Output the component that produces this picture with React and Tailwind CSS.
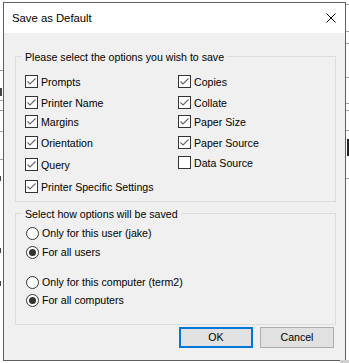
import React from "react";

function Check({ checked }) {
  return (
    <div className="w-[13px] h-[13px] shrink-0 border border-[#333333] bg-white flex items-center justify-center">
      {checked && (
        <svg width="11" height="11" viewBox="0 0 11 11">
          <polyline points="1.5,5.5 4,8 9.5,2.5" fill="none" stroke="#666666" strokeWidth="1.1" />
        </svg>
      )}
    </div>
  );
}

function Radio({ checked }) {
  return (
    <div className="w-[13px] h-[13px] shrink-0 rounded-full border border-[#333333] bg-white flex items-center justify-center">
      {checked && <div className="w-[7px] h-[7px] rounded-full bg-[#333333]" />}
    </div>
  );
}

function CRow({ label, checked = true, h }) {
  return (
    <div className={`flex items-start ${h}`}>
      <Check checked={checked} />
      <span className="ml-[3px] mt-[1px] whitespace-nowrap">{label}</span>
    </div>
  );
}

function RRow({ label, checked, h }) {
  return (
    <div className={`flex items-start ${h}`}>
      <Radio checked={checked} />
      <span className="ml-[3px] whitespace-nowrap">{label}</span>
    </div>
  );
}

export default function App() {
  return (
    <div className="relative w-[349px] h-[363px] bg-white overflow-hidden font-['Liberation_Sans',Arial,sans-serif] text-[10.6px] leading-[13px] text-black">
      {/* fragments of the window behind */}
      <div className="absolute left-0 top-[70px] w-[3px] h-px bg-[#a0a0a0]" />
      <div className="absolute left-0 top-[100px] w-[3px] h-px bg-[#a0a0a0]" />
      <div className="absolute left-0 top-[110px] w-[3px] h-px bg-[#a0a0a0]" />
      <div className="absolute left-0 top-[131px] w-[3px] h-px bg-[#a0a0a0]" />
      <div className="absolute left-0 top-[159px] w-[3px] h-px bg-[#a0a0a0]" />
      <div className="absolute left-0 top-[88px] w-[2px] h-[8px] bg-[#444]" />
      <div className="absolute left-0 top-[176px] w-[1px] h-[5px] bg-[#444]" />
      <div className="absolute left-0 top-[248px] w-[1px] h-[5px] bg-[#444]" />
      <div className="absolute left-0 top-[281px] w-[1px] h-[5px] bg-[#444]" />
      <div className="absolute right-0 top-[4px] w-[3px] h-px bg-[#a0a0a0]" />
      <div className="absolute right-0 top-[31px] w-[3px] h-px bg-[#a0a0a0]" />
      <div className="absolute right-0 top-[43px] w-[3px] h-px bg-[#a0a0a0]" />
      <div className="absolute right-0 top-[77px] w-[3px] h-px bg-[#a0a0a0]" />
      <div className="absolute right-0 top-[103px] w-[3px] h-px bg-[#a0a0a0]" />
      <div className="absolute right-0 top-[110px] w-[3px] h-px bg-[#a0a0a0]" />
      <div className="absolute right-0 top-[130px] w-[3px] h-px bg-[#a0a0a0]" />
      <div className="absolute right-0 top-[178px] w-[3px] h-px bg-[#a0a0a0]" />
      <div className="absolute right-0 top-[139px] w-[2px] h-[17px] bg-[#222]" />
      <div className="absolute right-0 bottom-0 w-[9px] h-[3px] bg-[#d0d0d0]" />

      {/* dialog */}
      <div className="ml-[3px] mt-[2px] w-[343px] h-[359px] border border-[#5f5f5f] flex flex-col bg-[#f0f0f0]">
        <div className="h-[30px] shrink-0 bg-white flex items-center justify-between pl-[8px] pr-[9px]">
          <span className="text-[11.3px] leading-[16px]">Save as Default</span>
          <svg width="10" height="10" viewBox="0 0 10 10">
            <path d="M0.5 0.5 L9.5 9.5 M9.5 0.5 L0.5 9.5" stroke="#000" strokeWidth="1" />
          </svg>
        </div>

        <div className="flex-1 pl-[11px] pt-[23px]">
          {/* group 1 */}
          <div className="relative w-[321px] h-[146px] border border-[#dcdcdc]">
            <span className="absolute left-[6px] top-[-6px] px-[3px] bg-[#f0f0f0] whitespace-nowrap">
              Please select the options you wish to save
            </span>
            <div className="flex pt-[18px] pl-[9px]">
              <div className="w-[153px] flex flex-col">
                <CRow label="Prompts" h="h-[21px]" />
                <CRow label="Printer Name" h="h-[19px]" />
                <CRow label="Margins" h="h-[21px]" />
                <CRow label="Orientation" h="h-[22px]" />
                <CRow label="Query" h="h-[22px]" />
                <CRow label="Printer Specific Settings" h="h-[13px]" />
              </div>
              <div className="flex flex-col">
                <CRow label="Copies" h="h-[21px]" />
                <CRow label="Collate" h="h-[19px]" />
                <CRow label="Paper Size" h="h-[21px]" />
                <CRow label="Paper Source" h="h-[20px]" />
                <CRow label="Data Source" checked={false} h="h-[13px]" />
              </div>
            </div>
          </div>

          {/* group 2 */}
          <div className="relative mt-[11px] w-[321px] h-[112px] border border-[#dcdcdc]">
            <span className="absolute left-[6px] top-[-6px] px-[3px] bg-[#f0f0f0] whitespace-nowrap">
              Select how options will be saved
            </span>
            <div className="flex flex-col pt-[13px] pl-[10px]">
              <RRow label="Only for this user (jake)" checked={false} h="h-[19px]" />
              <RRow label="For all users" checked h="h-[30px]" />
              <RRow label="Only for this computer (term2)" checked={false} h="h-[18px]" />
              <RRow label="For all computers" checked h="h-[13px]" />
            </div>
          </div>

          {/* buttons */}
          <div className="flex justify-end gap-[7px] mt-[2px] pr-[11px]">
            <button className="w-[74px] h-[21px] border-2 border-[#0078d7] bg-[#e1e1e1] flex items-center justify-center leading-[13px]">
              OK
            </button>
            <button className="w-[74px] h-[21px] border border-[#adadad] bg-[#e1e1e1] flex items-center justify-center leading-[13px]">
              Cancel
            </button>
          </div>
        </div>
      </div>
    </div>
  );
}
